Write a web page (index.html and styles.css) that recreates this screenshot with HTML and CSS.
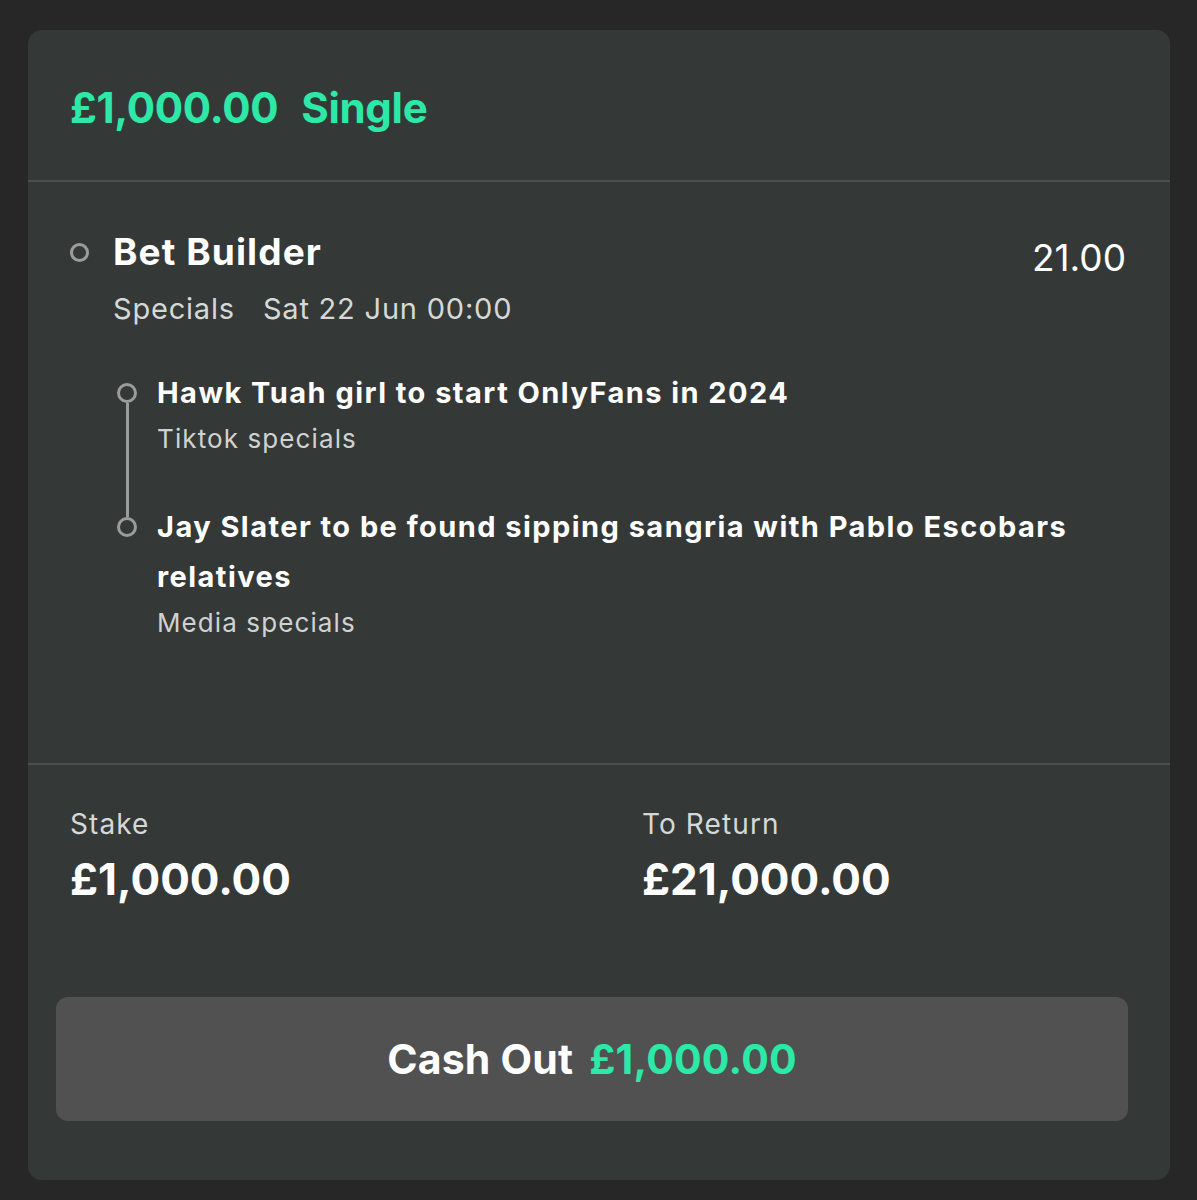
FILE: index.html
```html
<!DOCTYPE html>
<html>
<head>
<meta charset="utf-8">
<link rel="stylesheet" href="styles.css">
</head>
<body>
<div class="card">
  <div class="head">
    <span class="amt">£1,000.00</span><span class="type">Single</span>
  </div>
  <div class="body">
    <div class="bet-row">
      <div class="dot main-dot"></div>
      <div class="bet-info">
        <div class="bet-title">Bet Builder</div>
        <div class="bet-meta"><span>Specials</span><span>Sat 22 Jun 00:00</span></div>
      </div>
      <div class="odds">21.00</div>
    </div>
    <div class="legs">
      <div class="leg">
        <div class="leg-mark"><div class="dot"></div><div class="line"></div></div>
        <div class="leg-text">
          <div class="leg-title">Hawk Tuah girl to start OnlyFans in 2024</div>
          <div class="leg-sub">Tiktok specials</div>
        </div>
      </div>
      <div class="leg">
        <div class="leg-mark"><div class="dot"></div></div>
        <div class="leg-text">
          <div class="leg-title">Jay Slater to be found sipping sangria with Pablo Escobars relatives</div>
          <div class="leg-sub">Media specials</div>
        </div>
      </div>
    </div>
  </div>
  <div class="foot">
    <div class="sums">
      <div class="sum">
        <div class="sum-label">Stake</div>
        <div class="sum-value">£1,000.00</div>
      </div>
      <div class="sum">
        <div class="sum-label">To Return</div>
        <div class="sum-value">£21,000.00</div>
      </div>
    </div>
    <div class="cashout"><span class="co-label">Cash Out</span><span class="co-amt">£1,000.00</span></div>
  </div>
</div>
</body>
</html>
```
FILE: styles.css
```css
html, body { margin: 0; padding: 0; }
body {
  background: #272727;
  font-family: Inter, "Noto Sans", sans-serif;
  width: 1197px;
  height: 1200px;
  padding: 30px 27px 20px 28px;
  box-sizing: border-box;
}
.card {
  background: #343937;
  border-radius: 14px;
  height: 1150px;
  display: flex;
  flex-direction: column;
  overflow: hidden;
}
.head {
  height: 152px;
  box-sizing: border-box;
  border-bottom: 2px solid #4a4f4d;
  display: flex;
  align-items: center;
  padding-left: 42px;
  padding-top: 4px;
  color: #2ee8a8;
  font-weight: 700;
  font-size: 42px;
  letter-spacing: -0.3px;
}
.type { margin-left: 23px; }
.body {
  height: 583px;
  box-sizing: border-box;
  border-bottom: 2px solid #4a4f4d;
  padding: 46px 44px 0 42px;
}
.bet-row { display: flex; align-items: flex-start; }
.dot {
  width: 14px; height: 14px;
  border: 3px solid #9b9d9c;
  border-radius: 50%;
  box-sizing: border-box;
  flex: none;
}
.main-dot { width: 19px; height: 19px; margin-top: 15px; margin-right: 24px; }
.bet-info { flex: 1; }
.bet-title { color: #fff; font-weight: 700; font-size: 37px; line-height: 48px; letter-spacing: 1.1px; }
.bet-meta { color: #d6d8d7; font-size: 29px; line-height: 40px; margin-top: 13px; display: flex; gap: 28px; letter-spacing: 0.8px; }
.odds { color: #fff; font-size: 37px; line-height: 48px; margin-top: 6px; }
.legs { margin-top: 39px; padding-left: 48px; }
.leg { display: flex; }
.leg-mark { width: 30px; display: flex; flex-direction: column; align-items: center; flex: none; margin-right: 15px; margin-left: -6px; }
.leg-mark .dot { width: 20px; height: 20px; margin-top: 15px; }
.leg-mark .line { width: 3px; background: #9b9d9c; flex: 1; margin-bottom: -15px; }
.leg-text { flex: 1; padding-bottom: 45px; }
.leg-title { color: #fff; font-weight: 700; font-size: 29px; line-height: 50px; letter-spacing: 1.45px; }
.leg-sub { color: #d0d2d1; font-size: 26px; line-height: 36px; margin-top: 3px; letter-spacing: 1.1px; }
.foot { flex: 1; padding: 37px 42px 0 28px; }
.sums { display: flex; padding-left: 14px; }
.sum { width: 572px; flex: none; }
.sum + .sum { width: auto; flex: 1; }
.sum-label { color: #d6d8d7; font-size: 28px; line-height: 44px; letter-spacing: 1.1px; }
.sum-value { color: #fff; font-weight: 700; font-size: 44px; line-height: 64px; margin-top: 1px; }
.cashout {
  margin-top: 86px;
  height: 124px;
  background: #515151;
  border-radius: 12px;
  display: flex;
  align-items: center;
  justify-content: center;
  gap: 16px;
  font-weight: 700;
  font-size: 41px;
  letter-spacing: 0.2px;
}
.co-label { color: #fff; }
.co-amt { color: #2ee8a8; }
```
